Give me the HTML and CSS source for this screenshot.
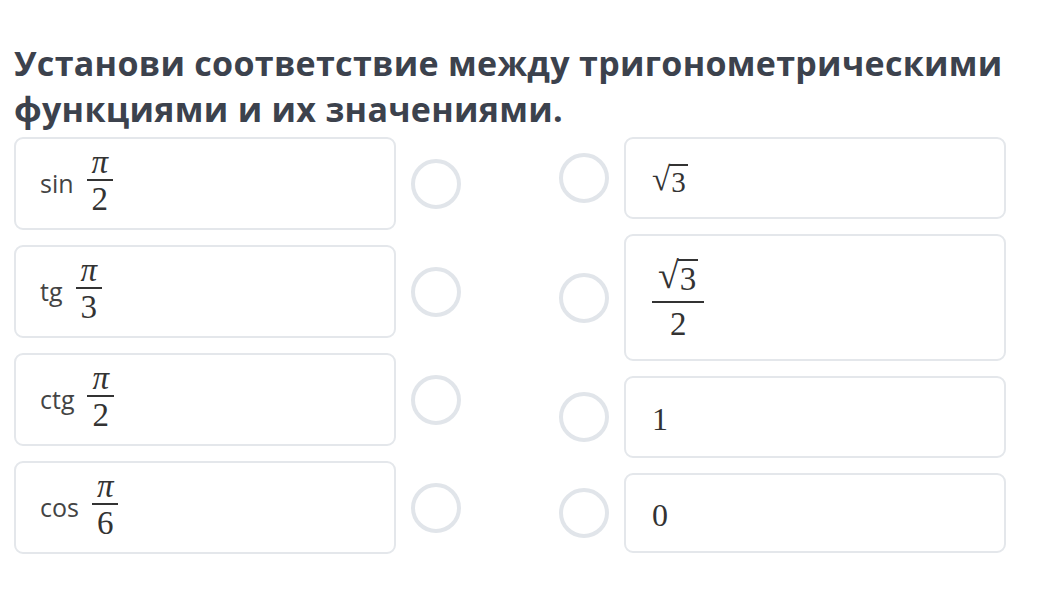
FILE: index.html
```html
<!DOCTYPE html>
<html lang="ru">
<head>
  <meta charset="UTF-8">
  <meta name="viewport" content="width=device-width, initial-scale=1.0">
  <title>Соответствие</title>
  <link rel="stylesheet" href="styles.css">
</head>
<body>
  <!-- заголовок задания -->
  <h1 class="task-title">Установи соответствие между тригонометрическими функциями и их значениями.</h1>

  <div class="match">
    <!-- левый столбец: функции -->
    <div class="column">
      <div class="row">
        <div class="card card-left">
          <span class="fn">sin</span>
          <span class="frac"><span class="num pi">π</span><span class="den">2</span></span>
        </div>
        <span class="dot"></span>
      </div>
      <div class="row">
        <div class="card card-left">
          <span class="fn">tg</span>
          <span class="frac"><span class="num pi">π</span><span class="den">3</span></span>
        </div>
        <span class="dot"></span>
      </div>
      <div class="row">
        <div class="card card-left">
          <span class="fn">ctg</span>
          <span class="frac"><span class="num pi">π</span><span class="den">2</span></span>
        </div>
        <span class="dot"></span>
      </div>
      <div class="row">
        <div class="card card-left">
          <span class="fn">cos</span>
          <span class="frac"><span class="num pi">π</span><span class="den">6</span></span>
        </div>
        <span class="dot"></span>
      </div>
    </div>

    <!-- правый столбец: значения -->
    <div class="column">
      <div class="row">
        <span class="dot"></span>
        <div class="card card-right">
          <span class="math small"><span class="sqrt"><span class="rad">√</span><span class="under">3</span></span></span>
        </div>
      </div>
      <div class="row">
        <span class="dot"></span>
        <div class="card card-right card-tall">
          <span class="frac wide">
            <span class="num"><span class="sqrt"><span class="rad">√</span><span class="under">3</span></span></span>
            <span class="den">2</span>
          </span>
        </div>
      </div>
      <div class="row">
        <span class="dot"></span>
        <div class="card card-right"><span class="math">1</span></div>
      </div>
      <div class="row">
        <span class="dot"></span>
        <div class="card card-right card-last"><span class="math">0</span></div>
      </div>
    </div>
  </div>
</body>
</html>
```

FILE: styles.css
```css
body {
  margin: 0;
  padding: 40px 14px 0;
  background-color: #fff;
  font-family: "Open Sans", "Liberation Sans", sans-serif;
  color: #3c424d;
}

.task-title {
  margin: 0 0 5px;
  width: 1010px;
  font-size: 34px;
  line-height: 46px;
  letter-spacing: 0.3px;
  font-weight: 700;
  color: #3c424d;
}

.match {
  display: flex;
  justify-content: space-between;
  width: 992px;
}

.column {
  display: flex;
  flex-direction: column;
  gap: 15px;
  width: 447px;
}

.row {
  display: flex;
  align-items: center;
  gap: 15px;
}

.card {
  flex: 1;
  display: flex;
  align-items: center;
  box-sizing: border-box;
  border: 2px solid #e4e7eb;
  border-radius: 9px;
  background-color: #fff;
}

.card-left {
  height: 93px;
  padding: 0 24px;
  gap: 13px;
}

.card-right {
  min-height: 82px;
  padding: 0 26px;
}

.card-tall {
  min-height: 127px;
}

.card-last {
  min-height: 80px;
}

.dot {
  flex: none;
  width: 50px;
  height: 50px;
  box-sizing: border-box;
  border: 4px solid #e1e5ea;
  border-radius: 50%;
}

.fn {
  font-size: 25px;
  color: #444;
  margin-top: -2px;
}

/* формулы */
.frac, .math {
  font-family: "Liberation Serif", "DejaVu Serif", serif;
  color: #333;
}

.math {
  font-size: 32px;
  margin-top: 4px;
}

.math.small {
  font-size: 29px;
  margin-top: 2px;
}

.frac {
  display: inline-flex;
  flex-direction: column;
  align-items: center;
  font-size: 33px;
  line-height: 30px;
  margin-top: -6px;
}

.frac .num {
  padding: 0 5px 2px;
}

.frac .den {
  align-self: stretch;
  text-align: center;
  border-top: 2px solid #333;
  padding-top: 3px;
}

.pi {
  font-style: italic;
}

.wide {
  margin-top: 0;
}

.wide .num {
  padding: 0 6px 5px;
}

.wide .den {
  padding-top: 6px;
}

.sqrt {
  display: inline-flex;
  align-items: flex-start;
}

.rad {
  font-size: 1.15em;
  line-height: 1;
  margin-top: 0.02em;
  margin-right: -1px;
}

.under {
  border-top: 2px solid #333;
  line-height: 1;
  padding: 2px 2px 0;
  margin-top: 0.1em;
}
```
